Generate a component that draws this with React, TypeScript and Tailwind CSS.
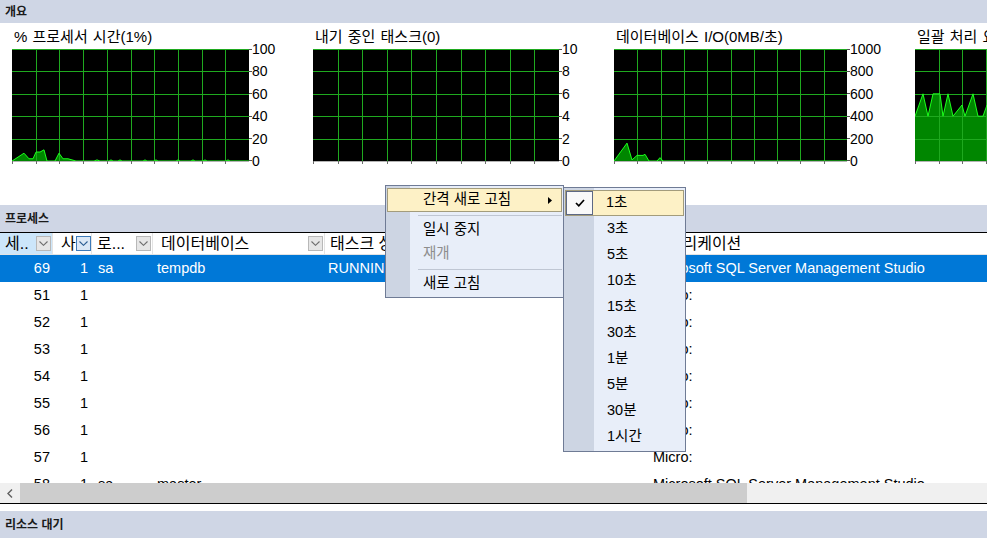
import React from 'react'

type Pt = [number, number]

type ChartDef = {
  title: string
  w: number
  labels: string[]
  data: Pt[]
}

// activity monitor charts, plot widths measured from the screenshot
const charts: ChartDef[] = [
  {
    title: '% 프로세서 시간(1%)',
    w: 237,
    labels: ['100', '80', '60', '40', '20', '0'],
    data: [
      [0, 0], [12, 7], [17, 2], [21, 2], [24, 8], [28, 8], [32, 10], [35, 0], [43, 0], [47, 7],
      [51, 2], [56, 2], [60, 1], [64, 0], [82, 0], [85, 1], [88, 0], [97, 0], [99, 1], [101, 0],
      [106, 0], [108, 1], [110, 0], [131, 0], [133, 1], [135, 0], [142, 0], [144, 1], [146, 0],
      [164, 0], [166, 1], [168, 0], [179, 0], [181, 1], [183, 0], [191, 0], [193, 1], [195, 0],
      [214, 0], [216, 1], [218, 0], [237, 0],
    ],
  },
  {
    title: '내기 중인 태스크(0)',
    w: 246,
    labels: ['10', '8', '6', '4', '2', '0'],
    data: [],
  },
  {
    title: '데이터베이스 I/O(0MB/초)',
    w: 233,
    labels: ['1000', '800', '600', '400', '200', '0'],
    data: [
      [0, 0], [13, 16], [18, 1], [23, 5], [29, 5], [31, 6], [35, 0], [43, 0], [46, 3], [49, 0], [233, 0],
    ],
  },
  {
    // only the left edge of this one is on screen, axis labels fall outside
    title: '일괄 처리 요청/초(5)',
    w: 237,
    labels: [],
    data: [
      [0, 40], [8, 60], [13, 40], [18, 60], [25, 60], [28, 40], [33, 60], [38, 40], [47, 50],
      [50, 40], [58, 60], [63, 40], [68, 40], [72, 50], [76, 40], [82, 60], [86, 40], [92, 50],
      [96, 40], [104, 60], [110, 40], [237, 40],
    ],
  },
]

function Plot({ w, data }: { w: number; data: Pt[] }) {
  const h = 112
  const y = (v: number) => h - (v / 100) * h
  const line = data.map(([x, v]) => `${x},${y(v)}`).join(' ')
  const area = data.length ? `0,${h} ${line} ${data[data.length - 1][0]},${h}` : ''
  const grid = '#1fa91f'
  return (
    <svg width={w} height={h + 3} className="block shrink-0" shapeRendering="crispEdges">
      <rect width={w} height={h} fill="#000" />
      {area && <polygon points={area} fill="#008600" />}
      {[1, 2, 3, 4, 5, 6, 7, 8, 9].map((i) => (
        <rect key={'v' + i} x={Math.round((i * w) / 10)} y={0} width={1} height={h} fill={grid} />
      ))}
      {[0, 1, 2, 3, 4].map((j) => (
        <rect key={'h' + j} x={0} y={Math.round((j * h) / 5)} width={w} height={1} fill={grid} />
      ))}
      {line && (
        <polyline points={line} fill="none" stroke="#1cff1c" strokeWidth={1} shapeRendering="auto" />
      )}
      <rect x={0} y={h} width={w} height={1} fill="#b4b4b4" />
      {[0, 1, 2, 3, 4, 5, 6, 7, 8, 9].map((i) => (
        <rect key={'t' + i} x={Math.round((i * w) / 10)} y={h} width={1} height={3} fill="#6a6a6a" />
      ))}
    </svg>
  )
}

function Chart({ c }: { c: ChartDef }) {
  return (
    <div className="w-[301px] shrink-0 pt-[5px]">
      <div className="h-[18px] leading-[18px] pl-[2px] text-[15px] [word-spacing:1px] whitespace-nowrap text-black">
        {c.title}
      </div>
      <div className="mt-[3px] flex items-start">
        <Plot w={c.w} data={c.data} />
        <div className="-mt-[7px] h-[126px] flex flex-col justify-between">
          {c.labels.map((l) => (
            <div key={l} className="flex items-center h-[14px]">
              <span className="w-[3px] h-px bg-[#505050]" />
              <span className="text-[14px] leading-[14px]">{l}</span>
            </div>
          ))}
        </div>
      </div>
    </div>
  )
}

function Band({ label }: { label: string }) {
  return (
    <div className="h-[27px] bg-[#cfd6e5] flex items-center pl-[5px] text-[12px] font-bold text-[#1a1a1a]">
      {label}
    </div>
  )
}

function DropBox({ active }: { active?: boolean }) {
  return (
    <span
      className={
        active
          ? 'w-[15px] h-[15px] border border-[#3d7ab8] bg-[#dbe8f6] flex items-center justify-center'
          : 'w-[15px] h-[15px] border border-[#b8b8b8] bg-[#e6e6e6] flex items-center justify-center'
      }
    >
      <svg width="9" height="5" viewBox="0 0 9 5">
        <path d="M0.5 0.5 L4.5 4.3 L8.5 0.5" fill="none" stroke={active ? '#2b5d93' : '#6e6e6e'} strokeWidth="1.1" />
      </svg>
    </span>
  )
}

type Row = { id: string; u: string; login?: string; db?: string; st?: string; app?: string; sel?: boolean }

const rows: Row[] = [
  { id: '69', u: '1', login: 'sa', db: 'tempdb', st: 'RUNNING', app: 'Microsoft SQL Server Management Studio', sel: true },
  { id: '51', u: '1', app: 'Micro:' },
  { id: '52', u: '1', app: 'Micro:' },
  { id: '53', u: '1', app: 'Micro:' },
  { id: '54', u: '1', app: 'Micro:' },
  { id: '55', u: '1', app: 'Micro:' },
  { id: '56', u: '1', app: 'Micro:' },
  { id: '57', u: '1', app: 'Micro:' },
  { id: '58', u: '1', login: 'sa', db: 'master', app: 'Microsoft SQL Server Management Studio' },
]

const intervals = ['1초', '3초', '5초', '10초', '15초', '30초', '1분', '5분', '30분', '1시간']

export default function App() {
  return (
    <div className="relative w-[987px] h-[545px] overflow-hidden bg-white text-black font-['Liberation_Sans','Noto_Sans_CJK_KR',sans-serif]">
      {/* 개요 */}
      <div className="h-[23px] bg-[#cfd6e5] flex items-center pl-[5px] text-[12px] font-bold text-[#1a1a1a]">
        개요
      </div>
      <div className="h-[182px] flex pl-[12px] overflow-hidden">
        {charts.map((c) => (
          <Chart key={c.title} c={c} />
        ))}
      </div>

      {/* 프로세스 */}
      <Band label="프로세스" />
      <div className="h-px bg-black" />
      <div className="flex h-[22px] border-b border-[#e3e3e3] text-[16px] whitespace-nowrap">
        <div className="w-[53px] shrink-0 bg-[#cce6fa] flex items-center pl-[5px] pr-px border-r border-[#e3e3e3]">
          <span>세..</span>
          <span className="ml-auto"><DropBox /></span>
        </div>
        <div className="w-[39px] shrink-0 flex items-center pl-[8px] pr-[1px] border-r border-[#e3e3e3]">
          <span>사</span>
          <span className="ml-auto"><DropBox active /></span>
        </div>
        <div className="w-[61px] shrink-0 flex items-center pl-[5px] pr-[1px] border-r border-[#e3e3e3]">
          <span>로...</span>
          <span className="ml-auto"><DropBox /></span>
        </div>
        <div className="w-[172px] shrink-0 flex items-center pl-[8px] pr-[1px] border-r border-[#e3e3e3]">
          <span>데이터베이스</span>
          <span className="ml-auto"><DropBox /></span>
        </div>
        <div className="w-[162px] shrink-0 flex items-center pl-[5px] border-r border-[#e3e3e3]">
          <span>태스크 상태</span>
        </div>
        <div className="w-[162px] shrink-0 flex items-center pl-[5px] border-r border-[#e3e3e3]">
          <span>명령</span>
        </div>
        <div className="flex-1 flex items-center pl-[4px]">
          <span>애플리케이션</span>
        </div>
      </div>
      <div className="h-[228px] overflow-hidden text-[14.5px] whitespace-nowrap">
        {rows.map((r) => (
          <div key={r.id} className={r.sel ? 'flex h-[27px] items-center bg-[#0078d7] text-white' : 'flex h-[27px] items-center'}>
            <div className="w-[53px] shrink-0 text-right pr-[3px]">{r.id}</div>
            <div className="w-[39px] shrink-0 text-right pr-[4px]">{r.u}</div>
            <div className="w-[61px] shrink-0 pl-[6px]">{r.login}</div>
            <div className="w-[172px] shrink-0 pl-[4px]">{r.db}</div>
            <div className="w-[162px] shrink-0 pl-[3px]">{r.st}</div>
            <div className="w-[162px] shrink-0" />
            <div className="flex-1 pl-[4px]">{r.app}</div>
          </div>
        ))}
      </div>
      <div className="flex h-[20px] bg-[#f0f0f0]">
        <div className="w-[20px] flex items-center justify-center">
          <svg width="6" height="9" viewBox="0 0 6 9">
            <path d="M5 0.5 L1 4.5 L5 8.5" fill="none" stroke="#606060" strokeWidth="1.4" />
          </svg>
        </div>
        <div className="w-[727px] bg-[#cdcdcd]" />
      </div>
      <div className="h-px bg-black" />
      <div className="h-[7px]" />
      <Band label="리소스 대기" />

      {/* context menu */}
      <div className="absolute left-[385px] top-[185px] w-[179px] h-[113px] border border-[#6f7b95] bg-[linear-gradient(to_right,#cdd5e3_24px,#e8eef9_24px)] px-px pt-[2px] text-[14.5px] whitespace-nowrap">
        <div className="h-[24px] border border-[#a39c7c] bg-[#fdf1c6] flex items-center pl-[35px]">
          <span>간격 새로 고침</span>
          <svg className="ml-auto mr-[9px]" width="4" height="7" viewBox="0 0 4 7">
            <polygon points="0,0 4,3.5 0,7" fill="#000" />
          </svg>
        </div>
        <div className="h-[6px] flex items-center pl-[31px]">
          <div className="h-px w-full bg-[#bfc6d3]" />
        </div>
        <div className="h-[24px] flex items-center pl-[36px]">일시 중지</div>
        <div className="h-[24px] flex items-center pl-[36px] text-[#8d8d8d]">재개</div>
        <div className="h-[6px] flex items-center pl-[31px]">
          <div className="h-px w-full bg-[#bfc6d3]" />
        </div>
        <div className="h-[24px] flex items-center pl-[36px]">새로 고침</div>
      </div>

      {/* submenu */}
      <div className="absolute left-[563px] top-[187px] w-[123px] h-[265px] border border-[#6f7b95] bg-[linear-gradient(to_right,#cdd5e3_30px,#e8eef9_30px)] px-px pt-[2px] text-[14.5px] whitespace-nowrap">
        {intervals.map((t, i) =>
          i === 0 ? (
            <div key={t} className="h-[26px] border border-[#a39c7c] bg-[#fdf1c6] flex items-stretch">
              <div className="w-[27px] border border-[#5d6884] bg-[#f9f9f9] flex items-center justify-center">
                <svg width="10" height="8" viewBox="0 0 10 8">
                  <path d="M1 4 L3.8 6.8 L9 1" fill="none" stroke="#000" strokeWidth="1.7" />
                </svg>
              </div>
              <span className="flex items-center pl-[13px]">{t}</span>
            </div>
          ) : (
            <div key={t} className="h-[26px] flex items-center pl-[42px]">
              {t}
            </div>
          )
        )}
      </div>
    </div>
  )
}
